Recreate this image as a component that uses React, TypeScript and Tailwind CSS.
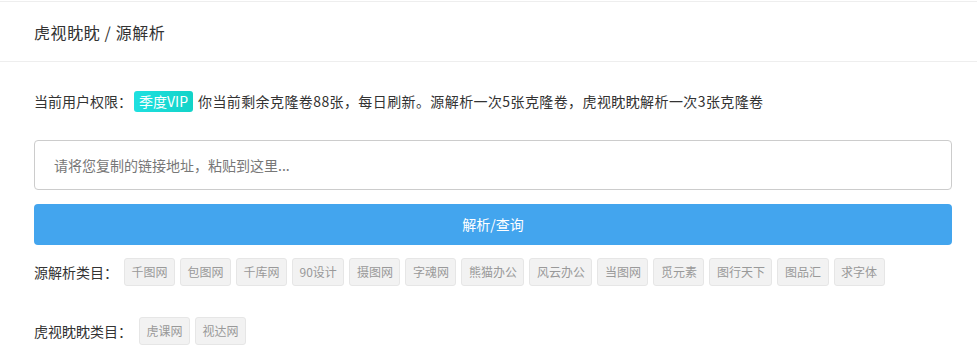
const yuan = ["千图网", "包图网", "千库网", "90设计", "摄图网", "字魂网", "熊猫办公", "风云办公", "当图网", "觅元素", "图行天下", "图品汇", "求字体"]
const hu = ["虎课网", "视达网"]

function Tag({ name }: { name: string }) {
  return (
    <span className="h-[28px] px-[6.5px] flex items-center border border-[#e6e6e6] bg-[#f2f2f2] rounded-[3px] text-[12px] text-[#999]">
      {name}
    </span>
  )
}

export default function App() {
  return (
    <div className="w-[977px] h-[355px] bg-white overflow-hidden text-[#333] font-['Noto_Sans_CJK_SC',sans-serif]">
      <div className="mt-[1px] border-t border-[#eee] h-[61px] flex items-center px-[34px] border-b">
        <span className="text-[16px] tracking-[0.6px]">虎视眈眈 / 源解析</span>
      </div>
      <div className="pl-[34px] pr-[25px]">
        <div className="mt-[28px] h-[22px] flex items-center text-[14px]">
          <span className="mr-[2px]">当前用户权限：</span>
          <span className="h-[21px] px-[5px] flex items-center rounded-[3px] bg-gradient-to-r from-[#1ee0e0] to-[#12d3c8] text-white text-[14px]">
            季度VIP
          </span>
          <span className="ml-[5px] tracking-[0.4px]">你当前剩余克隆卷88张，每日刷新。源解析一次5张克隆卷，虎视眈眈解析一次3张克隆卷</span>
        </div>
        <div className="mt-[28px] h-[50px] border border-[#ccc] rounded-[4px] flex items-center px-[19px] text-[14px] text-[#777]">
          请将您复制的链接地址，粘贴到这里...
        </div>
        <div className="mt-[14px] h-[41px] rounded-[4px] bg-[#43a5ee] flex items-center justify-center text-white text-[14px]">
          解析/查询
        </div>
        <div className="mt-[13px] flex items-center">
          <span className="text-[14px] mr-[6px]">源解析类目：</span>
          <div className="flex gap-[5px]">
            {yuan.map((n) => (
              <Tag key={n} name={n} />
            ))}
          </div>
        </div>
        <div className="mt-[31px] flex items-center">
          <span className="text-[14px] mr-[7px]">虎视眈眈类目：</span>
          <div className="flex gap-[5px]">
            {hu.map((n) => (
              <Tag key={n} name={n} />
            ))}
          </div>
        </div>
      </div>
    </div>
  )
}
